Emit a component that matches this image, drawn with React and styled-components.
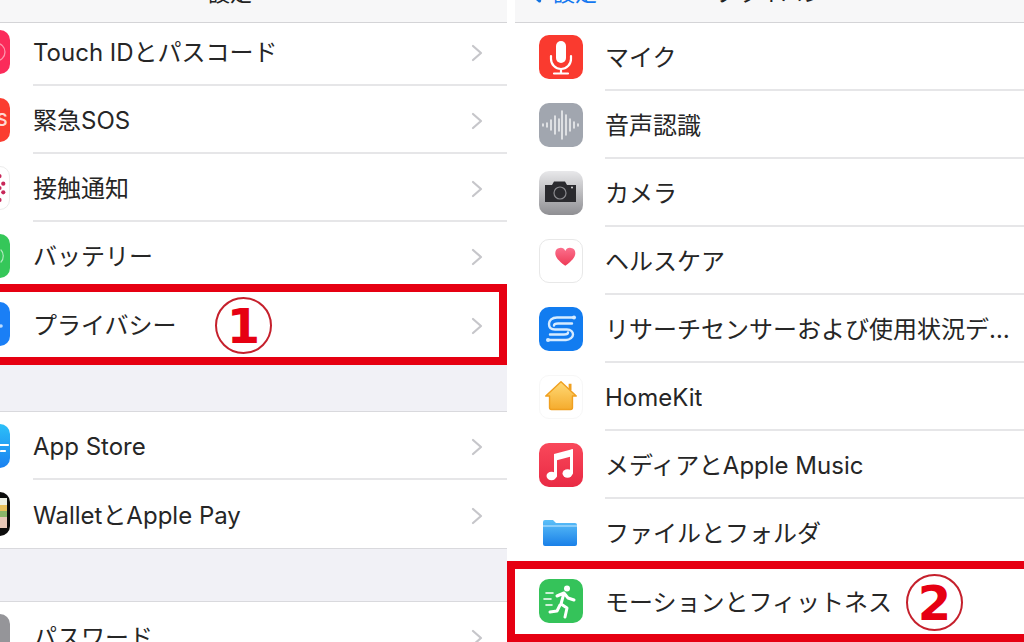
import React from "react";
import styled, { createGlobalStyle } from "styled-components";

const Global = createGlobalStyle`
  html, body { margin: 0; padding: 0; background: #fff; }
  body { width: 1024px; height: 642px; overflow: hidden; font-family: "Inter", "Noto Sans CJK JP", sans-serif; }
`;
const Page = styled.div`
  position: relative; width: 1024px; height: 642px; overflow: hidden;
  display: grid; grid-template-columns: 507px 509px; column-gap: 8px; background: #fff;
`;
const Panel = styled.section`
  display: flex; flex-direction: column; height: 642px; overflow: hidden; background: #f1f1f6;
`;
const NavBar = styled.header`
  position: relative; z-index: 1; flex: none; height: 23px; box-sizing: border-box;
  background: #f7f7f8; border-bottom: 1px solid #d4d4d7; overflow: hidden;
  display: flex; justify-content: center; align-items: flex-end;
  padding-left: ${p => p.$padL || 0}px; padding-right: ${p => p.$padR || 0}px;
`;
const NavTitle = styled.div`
  font-size: 22px; line-height: 30px; height: 30px; margin-bottom: 14px; color: #222; white-space: nowrap;
`;
const Back = styled.div`
  position: absolute; left: 13px; bottom: 14px; display: flex; align-items: center; gap: 11px;
  color: #1478f0; font-size: 22px; line-height: 30px;
`;
const Group = styled.div`
  flex: none; background: #fff; margin-top: ${p => p.$top}px;
  border-bottom: ${p => (p.$edge ? "1px solid #d9d9dd" : "none")};
  ${p => (p.$open ? "border-top: 1px solid #d9d9dd;" : "")}
`;
const Row = styled.div`
  height: 68px; box-sizing: border-box; display: flex; align-items: center;
  padding-left: ${p => p.$pad}px; gap: ${p => p.$gap}px;
`;
const Tile = styled.div`
  flex: none; width: 44px; height: 44px; border-radius: 10px; overflow: hidden; box-sizing: border-box;
  display: flex; align-items: center; justify-content: center;
  margin-left: ${p => (p.$peek ? -34 : 0)}px;
  background: ${p => p.$bg};
  ${p => (p.$line ? `border: 1px solid ${p.$line};` : "")}
`;
const Body = styled.div`
  flex: 1; min-width: 0; height: 100%; box-sizing: border-box; display: flex; align-items: center;
  justify-content: space-between; padding-top: 4px; padding-right: ${p => p.$trim}px;
  border-bottom: ${p => (p.$last ? "none" : "2px solid #e6e6e8")};
`;
const Label = styled.span`
  font-size: 24px; line-height: 30px; color: #262626; white-space: nowrap;
  overflow: hidden; text-overflow: ellipsis;
`;
const Chevron = styled.svg`
  flex: none; width: 12px; height: 18px; fill: none; stroke: #c6c6ca; stroke-width: 2.2;
  stroke-linecap: round; stroke-linejoin: round;
`;
const BackChevron = styled(Chevron)`
  width: 14px; height: 20px; stroke: #1272e0; stroke-width: 3;
`;
const RedBox = styled.div`
  position: absolute; box-sizing: border-box; border: 8px solid #e60012;
  left: ${p => p.$x}px; top: ${p => p.$y}px; width: ${p => p.$w}px; height: ${p => p.$h}px;
`;
const Badge = styled.div`
  position: absolute; box-sizing: border-box; width: 57px; height: 57px; border-radius: 50%;
  border: 2.5px solid #c5202c; color: #e60012; background: #fff;
  left: ${p => p.$x}px; top: ${p => p.$y}px;
  display: flex; align-items: center; justify-content: center;
  font-family: "DejaVu Sans", sans-serif; font-weight: 700; font-size: 48px; line-height: 1;
`;

const Arrow = () => <Chevron viewBox="0 0 12 18"><path d="M2 2l8 7-8 7" /></Chevron>;

const W = { fill: "none", stroke: "#fff", strokeLinecap: "round", strokeLinejoin: "round" };
const Mic = () => (
  <svg width="44" height="44" viewBox="0 0 44 44">
    <rect x="17" y="6" width="10" height="22" rx="5" fill="#fff" />
    <path d="M12 21v3a10 10 0 0 0 20 0v-3M22 34v4M15 38.500h14" {...W} strokeWidth="2.200" />
  </svg>
);
const Wave = () => (
  <svg width="44" height="44" viewBox="0 0 44 44">
    {[[4,1],[8,2],[12,5],[16,9],[20,6],[23,14],[27,10],[31,6],[35,3],[39,1]].map(([x, h]) => (
      <path key={x} d={`M${x} ${22 - h}V${22 + h}`} {...W} strokeWidth="1.300" />
    ))}
  </svg>
);
const Camera = () => (
  <svg width="44" height="44" viewBox="0 0 44 44">
    <path d="M6 14h7l2-3.500h11l2 3.500h9v17H6z" fill="#2a2a2e" />
    <circle cx="21" cy="22" r="6" fill="none" stroke="#8a8a8e" strokeWidth="1.200" />
    <circle cx="33" cy="16.500" r="1" fill="#ddd" />
  </svg>
);
const Heart = () => (
  <svg width="44" height="44" viewBox="0 0 44 44">
    <defs><linearGradient id="hp" x1="0" y1="0" x2="0" y2="1"><stop offset="0" stopColor="#fb6f8c" /><stop offset="1" stopColor="#ee3a56" /></linearGradient></defs>
    <path d="M26.500 27C18 21 16 17 16 13.500A5.500 5.500 0 0 1 26.500 11.500A5.500 5.500 0 0 1 37 13.500C37 17 35 21 26.500 27z" fill="url(#hp)" />
  </svg>
);
const Research = () => (
  <svg width="44" height="44" viewBox="0 0 44 44">
    <g fill="none" stroke="#d6ebff" strokeWidth="2.400" strokeLinecap="round">
      <path d="M34 10.500H18c-5 0-8 3-8 6.500s2 5.500 6 5.500h12c4 0 6 2.500 6 5s-3 5.500-7 5.500H10" />
      <path d="M33 16.500H19c-3 0-4 1-4 2" />
      <path d="M11 27.500h14c3 0 4-1 4-2" />
    </g>
    <circle cx="35" cy="10.500" r="2" fill="#d6ebff" />
    <circle cx="9" cy="33" r="2" fill="#d6ebff" />
  </svg>
);
const Home = () => (
  <svg width="44" height="44" viewBox="0 0 44 44">
    <defs><linearGradient id="h" x1="0" y1="0" x2="0" y2="1"><stop offset="0" stopColor="#ffd976" /><stop offset="1" stopColor="#f5ac2e" /></linearGradient></defs>
    <path d="M30 8h3v7h-3z" fill="#f0a020" />
    <path d="M22 6L6 21h4v12a2 2 0 0 0 2 2h20a2 2 0 0 0 2-2V21h4z" fill="url(#h)" stroke="#f0a020" strokeWidth="1.500" strokeLinejoin="round" />
  </svg>
);
const Music = () => (
  <svg width="44" height="44" viewBox="0 0 44 44">
    <path d="M15 11l19-5v7l-19 5z" fill="#fff" />
    <path d="M16.500 13v20M32.500 8v22" {...W} strokeWidth="3" />
    <ellipse cx="12.500" cy="33" rx="5" ry="4.200" fill="#fff" />
    <ellipse cx="28.500" cy="30.500" rx="5" ry="4.200" fill="#fff" />
  </svg>
);
const Folder = () => (
  <svg width="44" height="44" viewBox="0 0 44 44">
    <defs><linearGradient id="f" x1="0" y1="0" x2="0" y2="1"><stop offset="0" stopColor="#5cc0f8" /><stop offset="1" stopColor="#1a80e8" /></linearGradient></defs>
    <path d="M4 11a2 2 0 0 1 2-2h8l3 3h19a2 2 0 0 1 2 2v19a2 2 0 0 1-2 2H6a2 2 0 0 1-2-2z" fill="url(#f)" />
    <path d="M4 15h34" stroke="#c8eaff" strokeWidth="1" />
  </svg>
);
const Runner = () => (
  <svg width="44" height="44" viewBox="0 0 44 44">
    <circle cx="28" cy="9.500" r="3" fill="#fff" />
    <path d="M18 17l7-3 4 5 6 2M25 14l-3 11 6 4-2 9M21 26l-3 6-7 1" {...W} strokeWidth="3" />
    <path d="M7 14h7M5 20h7M7 26h6" {...W} strokeWidth="1.600" />
  </svg>
);
const Peek = ({ kind }) => {
  if (kind === "touch") return <svg width="44" height="44" viewBox="0 0 44 44"><circle cx="30" cy="22" r="9" {...W} strokeWidth="1.300" opacity=".5" /></svg>;
  if (kind === "sos") return <svg width="44" height="44" viewBox="0 0 44 44"><text x="36" y="28" textAnchor="middle" fontSize="17" fontWeight="600" fill="#ffd9d4" fontFamily="Inter">S</text></svg>;
  if (kind === "dots") return <svg width="44" height="44" viewBox="0 0 44 44">{[[38,17.5],[38,26.5],[34,9.5],[34,34.5],[34,22]].map(([x, y]) => <circle key={`${x}${y}`} cx={x} cy={y} r="2.200" fill="#c8285a" />)}</svg>;
  if (kind === "batt") return <svg width="44" height="44" viewBox="0 0 44 44"><path d="M35 16c3 3 3 9 0 12" {...W} strokeWidth="1.200" opacity=".6" /></svg>;
  if (kind === "hand") return <svg width="44" height="44" viewBox="0 0 44 44"><circle cx="35" cy="24" r="1.800" fill="#bcdcff" /></svg>;
  if (kind === "store") return <svg width="44" height="44" viewBox="0 0 44 44"><path d="M34 21h8M35 27h4" {...W} strokeWidth="2.200" /></svg>;
  if (kind === "wallet") return <svg width="44" height="44" viewBox="0 0 44 44"><rect x="30" y="6" width="11" height="7" fill="#eef0e4" /><rect x="30" y="13" width="11" height="6" fill="#e8c05c" /><rect x="30" y="19" width="11" height="6" fill="#8ab56a" /><rect x="30" y="25" width="11" height="11" fill="#e8c8b8" /></svg>;
  return null;
};

const left = [
  { top: -5, edge: true, rows: [
    { t: "Touch IDとパスコード", bg: "#fb2b5a", k: "touch" },
    { t: "緊急SOS", bg: "#fb3d30", k: "sos" },
    { t: "接触通知", bg: "#fff", k: "dots", line: "#ececec" },
    { t: "バッテリー", bg: "#35c759", k: "batt" },
    { t: "プライバシー", bg: "#1a7ff6", k: "hand" },
  ]},
  { top: 52, edge: true, open: true, rows: [
    { t: "App Store", bg: "linear-gradient(#2cc0f8,#1a80f0)", k: "store" },
    { t: "WalletとApple Pay", bg: "#0c0c0c", k: "wallet" },
  ]},
  { top: 52, open: true, rows: [{ t: "パスワード", bg: "#959599", k: "pw" }] },
];
const right = [
  { t: "マイク", bg: "#fa3a2f", I: Mic },
  { t: "音声認識", bg: "#a1a6af", I: Wave },
  { t: "カメラ", bg: "linear-gradient(#e8e8ea,#8f8f93)", I: Camera },
  { t: "ヘルスケア", bg: "#fff", I: Heart, line: "#e8e8e8" },
  { t: "リサーチセンサーおよび使用状況データ", bg: "#127cf0", I: Research },
  { t: "HomeKit", bg: "#fff", I: Home, line: "#f7f7f7" },
  { t: "メディアとApple Music", bg: "linear-gradient(#f9485a,#e92a44)", I: Music },
  { t: "ファイルとフォルダ", bg: "#fff", I: Folder },
  { t: "モーションとフィットネス", bg: "#35c35a", I: Runner },
];

export default function App() {
  return (
    <Page>
      <Global />
      <Panel>
        <NavBar $padR={47}><NavTitle>設定</NavTitle></NavBar>
        {left.map((g, i) => (
          <Group key={i} $top={g.top} $edge={g.edge} $open={g.open}>
            {g.rows.map((r, j) => (
              <Row key={r.t} $pad={0} $gap={23}>
                <Tile $peek $bg={r.bg} $line={r.line}><Peek kind={r.k} /></Tile>
                <Body $trim={24} $last={j === g.rows.length - 1}><Label>{r.t}</Label><Arrow /></Body>
              </Row>
            ))}
          </Group>
        ))}
      </Panel>
      <Panel>
        <NavBar $padL={23}>
          <Back><BackChevron viewBox="0 0 12 18"><path d="M10 2L2 9l8 7" /></BackChevron>設定</Back>
          <NavTitle>プライバシー</NavTitle>
        </NavBar>
        <Group $top={0}>
          {right.map((r, j) => (
            <Row key={r.t} $pad={24} $gap={22}>
              <Tile $bg={r.bg} $line={r.line}><r.I /></Tile>
              <Body $trim={8} $last={j === right.length - 1}><Label>{r.t}</Label></Body>
            </Row>
          ))}
        </Group>
      </Panel>
      <RedBox $x={-10} $y={284} $w={517} $h={81} />
      <RedBox $x={507} $y={561} $w={530} $h={81} />
      <Badge $x={215} $y={297}>1</Badge>
      <Badge $x={906} $y={574}>2</Badge>
    </Page>
  );
}
